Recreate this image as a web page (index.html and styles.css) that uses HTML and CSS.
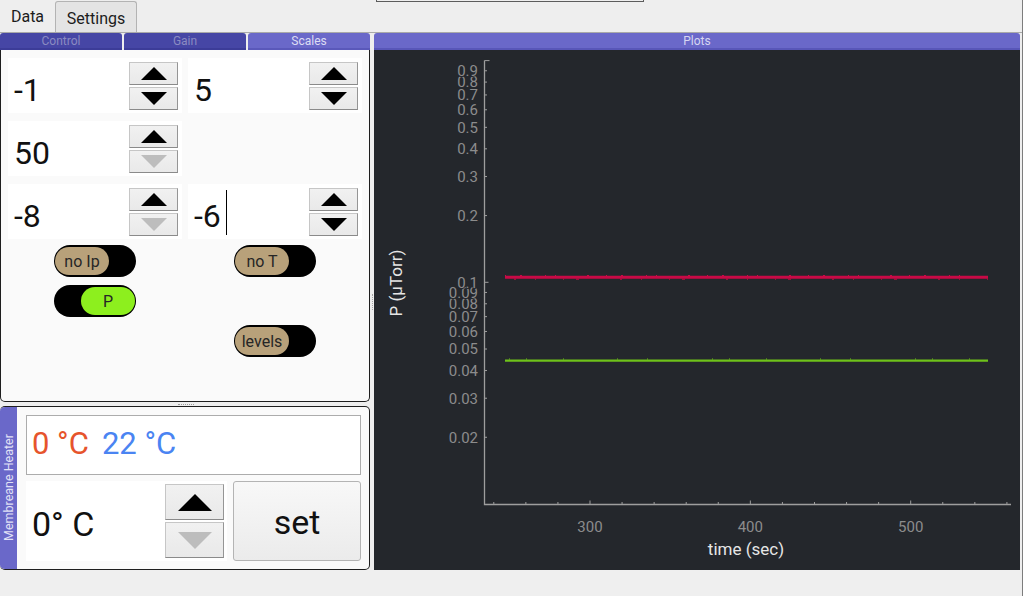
FILE: index.html
```html
<!DOCTYPE html>
<html>
<head>
<meta charset="utf-8">
<link rel="stylesheet" href="styles.css">
</head>
<body>
<div class="app">
  <div class="tabbar">
    <div class="tab tab-active">Data</div>
    <div class="tab tab-idle">Settings</div>
    <div class="ghost-box"></div>
  </div>
  <div class="pane">
    <div class="left">
      <div class="subtabs">
        <div class="subtab dim">Control</div>
        <div class="subtab dim">Gain</div>
        <div class="subtab lit">Scales</div>
      </div>
      <div class="control">
        <div class="spin-grid">
          <div class="spin">
            <div class="val">-1</div>
            <div class="btns"><div class="sb"><span class="up"></span></div><div class="sb"><span class="down"></span></div></div>
          </div>
          <div class="spin">
            <div class="val">5</div>
            <div class="btns"><div class="sb"><span class="up"></span></div><div class="sb"><span class="down"></span></div></div>
          </div>
          <div class="spin">
            <div class="val">50</div>
            <div class="btns"><div class="sb"><span class="up"></span></div><div class="sb"><span class="down off"></span></div></div>
          </div>
          <div class="cell-empty"></div>
          <div class="spin">
            <div class="val">-8</div>
            <div class="btns"><div class="sb"><span class="up"></span></div><div class="sb"><span class="down off"></span></div></div>
          </div>
          <div class="spin">
            <div class="val">-6<span class="caret"></span></div>
            <div class="btns"><div class="sb"><span class="up"></span></div><div class="sb"><span class="down"></span></div></div>
          </div>
        </div>
        <div class="toggles">
          <div class="tg"><div class="knob">no Ip</div></div>
          <div class="tg"><div class="knob">no T</div></div>
          <div class="tg on"><div class="knob">P</div></div>
          <div class="cell-empty"></div>
          <div class="cell-empty"></div>
          <div class="tg"><div class="knob">levels</div></div>
        </div>
      </div>
      <div class="hsplit"><span class="dots-h"></span></div>
      <div class="heater">
        <div class="heater-label"><span>Membreane Heater</span></div>
        <div class="heater-body">
          <div class="temp"><span class="t-red">0 °C</span><span class="t-blue">22 °C</span></div>
          <div class="heater-row">
            <div class="spin big">
              <div class="val">0° C</div>
              <div class="btns"><div class="sb"><span class="up"></span></div><div class="sb"><span class="down off"></span></div></div>
            </div>
            <div class="set-btn">set</div>
          </div>
        </div>
      </div>
    </div>
    <div class="vsplit"><span class="dots-v"></span></div>
    <div class="right">
      <div class="plots-head">Plots</div>
      <div class="plot">
        <svg width="646" height="520" viewBox="0 0 646 520" xmlns="http://www.w3.org/2000/svg">
          <g class="ylabels">
            <text x="104" y="392.57">0.02</text>
            <text x="104" y="353.53">0.03</text>
            <text x="104" y="325.82">0.04</text>
            <text x="104" y="304.33">0.05</text>
            <text x="104" y="286.77">0.06</text>
            <text x="104" y="271.94">0.07</text>
            <text x="104" y="259.08">0.08</text>
            <text x="104" y="247.75">0.09</text>
            <text x="104" y="237.6">0.1</text>
            <text x="104" y="170.87">0.2</text>
            <text x="104" y="131.83">0.3</text>
            <text x="104" y="104.12">0.4</text>
            <text x="104" y="82.63">0.5</text>
            <text x="104" y="65.07">0.6</text>
            <text x="104" y="50.24">0.7</text>
            <text x="104" y="37.38">0.8</text>
            <text x="104" y="26.05">0.9</text>
          </g>
          <path class="axis" d="M110.5 10.6V454.5H637"/>
          <path class="ticks" d="M110.5 10.6h5M110.5 20.75h2.5M110.5 32.08h2.5M110.5 44.94h2.5M110.5 59.77h2.5M110.5 77.33h2.5M110.5 98.82h2.5M110.5 126.53h2.5M110.5 165.57h2.5M110.5 232.3h4M110.5 242.45h2.5M110.5 253.78h2.5M110.5 266.64h2.5M110.5 281.47h2.5M110.5 299.03h2.5M110.5 320.52h2.5M110.5 348.23h2.5M110.5 387.27h2.5"/>
          <path class="ticks" d="M119.79 454.5v-2.5M151.86 454.5v-2.5M183.93 454.5v-2.5M216 454.5v-4M248.07 454.5v-2.5M280.14 454.5v-2.5M312.21 454.5v-2.5M344.28 454.5v-2.5M376.35 454.5v-4M408.42 454.5v-2.5M440.49 454.5v-2.5M472.56 454.5v-2.5M504.63 454.5v-2.5M536.7 454.5v-4M568.77 454.5v-2.5M600.84 454.5v-2.5M632.91 454.5v-2.5"/>
          <g class="xlabels">
            <text x="216" y="481.5">300</text>
            <text x="376.35" y="481.5">400</text>
            <text x="536.7" y="481.5">500</text>
          </g>
          <text class="axis-title" x="372" y="505">time (sec)</text>
          <text class="axis-title" transform="translate(28 233) rotate(-90)" x="0" y="0">P (µTorr)</text>
          <line class="red" x1="131" y1="227.3" x2="614" y2="227.3"/>
          <line class="red-noise" x1="131" y1="225.5" x2="614" y2="225.5"/>
          <line class="red-noise2" x1="140" y1="229.2" x2="614" y2="229.2"/>
          <line class="green" x1="131" y1="310.6" x2="614" y2="310.6"/>
          <line class="green-noise" x1="135" y1="309" x2="614" y2="309"/>
        </svg>
      </div>
    </div>
  </div>
  <div class="status"></div>
</div>
</body>
</html>
```

FILE: styles.css
```css
* { box-sizing: border-box; }
html, body { margin: 0; padding: 0; }
body {
  width: 1023px;
  height: 596px;
  overflow: hidden;
  background: #eeeeee;
  font-family: Roboto, "Liberation Sans", sans-serif;
  color: #111;
}
.app {
  display: flex;
  flex-direction: column;
  height: 596px;
  border-right: 1px solid #7d7d7d;
}

/* top tab bar */
.tabbar { display: flex; height: 32px; flex: 0 0 32px; }
.tab {
  font-size: 16px;
  height: 32px;
  display: flex;
  align-items: center;
  justify-content: center;
  color: #1c1c1c;
}
.tab-active { width: 55px; padding-top: 1px; }
.tab-idle {
  width: 82px;
  margin-top: 1px;
  height: 31px;
  padding-top: 2px;
  background: #e4e4e4;
  border: 1px solid #b3b3b3;
  border-bottom: none;
  border-radius: 3px 3px 0 0;
}
.ghost-box {
  margin-left: 239px;
  width: 268px;
  height: 2px;
  border: 1px solid #5c5c5c;
  border-top: none;
}

/* main pane */
.pane {
  display: flex;
  height: 538px;
  flex: 0 0 538px;
  border-top: 1px solid #a9a9a9;
}
.left { width: 370px; flex: 0 0 370px; display: flex; flex-direction: column; }
.subtabs { display: flex; gap: 2px; height: 17px; flex: 0 0 17px; }
.subtab {
  width: 122px;
  font-size: 12px;
  line-height: 16px;
  text-align: center;
  border-radius: 3px 3px 0 0;
}
.subtab.dim { background: #4646a5; color: #8b8bc2; box-shadow: inset 0 -2px 0 #3c3c98; }
.subtab.lit { background: #6a68c9; color: #dcdcf4; box-shadow: inset 0 -2px 0 #5a58ba; }

.control {
  height: 352px;
  flex: 0 0 352px;
  background: #fafafa;
  border: 1px solid #1e1e1e;
  border-top: none;
  border-radius: 0 0 5px 5px;
  padding: 8px 7px 0;
}
.spin-grid {
  display: grid;
  grid-template-columns: 174px 174px;
  grid-auto-rows: 55px;
  gap: 8px 6px;
}
.spin { background: #fff; display: flex; align-items: center; }
.val {
  flex: 1;
  font-size: 32px;
  line-height: 1;
  padding: 8px 0 0 6px;
  white-space: nowrap;
  display: flex;
  align-items: center;
}
.caret {
  display: inline-block;
  width: 1px;
  height: 45px;
  background: #000;
  margin-left: 5px;
  margin-top: -6px;
}
.btns { display: flex; flex-direction: column; gap: 2px; margin-right: 4px; }
.sb {
  width: 49px;
  height: 23px;
  background: linear-gradient(#f1f1f1, #e9e9e9);
  border: 1px solid #c6c6c6;
  border-right-color: #959595;
  border-bottom-color: #8a8a8a;
  display: flex;
  align-items: center;
  justify-content: center;
}
.up {
  width: 0; height: 0;
  border-left: 13.5px solid transparent;
  border-right: 13.5px solid transparent;
  border-bottom: 13px solid #000;
}
.down {
  width: 0; height: 0;
  border-left: 13.5px solid transparent;
  border-right: 13.5px solid transparent;
  border-top: 13px solid #000;
}
.down.off { border-top-color: #bdbdbd; }
.up.off { border-bottom-color: #bdbdbd; }

.toggles {
  display: grid;
  grid-template-columns: 174px 174px;
  grid-auto-rows: 32px;
  gap: 8px 6px;
  margin-top: 6px;
}
.tg {
  justify-self: center;
  width: 82px;
  height: 32px;
  background: #000;
  border-radius: 16px;
  padding: 2px 1px;
  display: flex;
}
.tg.on { justify-content: flex-end; }
.knob {
  width: 54px;
  height: 28px;
  border-radius: 14px;
  background: #b8a17a;
  font-size: 16px;
  color: #262626;
  display: flex;
  align-items: center;
  justify-content: center;
}
.tg.on .knob { background: #8def1e; }

.hsplit {
  height: 4px;
  flex: 0 0 4px;
  display: flex;
  justify-content: center;
  align-items: center;
  padding-left: 2px;
}
.dots-h { width: 16px; height: 0; border-top: 1px dotted #9a9a9a; }

/* heater */
.heater {
  height: 164px;
  flex: 0 0 164px;
  display: flex;
  background: #fafafa;
  border: 1px solid #1e1e1e;
  border-left: none;
  border-radius: 5px;
  overflow: hidden;
}
.heater-label {
  width: 17px;
  flex: 0 0 17px;
  background: #6a68c9;
  display: flex;
  align-items: center;
  justify-content: center;
}
.heater-label span {
  writing-mode: vertical-rl;
  transform: rotate(180deg);
  font-size: 12.5px;
  color: #e0e0f6;
  white-space: nowrap;
}
.heater-body {
  flex: 1;
  padding: 8px 8px 0 9px;
  display: flex;
  flex-direction: column;
  gap: 6px;
}
.temp {
  height: 60px;
  flex: 0 0 60px;
  border: 1px solid #acacac;
  background: #fff;
  font-size: 31px;
  line-height: 1;
  display: flex;
  align-items: center;
  gap: 13px;
  padding: 0 0 3px 5px;
}
.t-red { color: #e6542c; }
.t-blue { color: #4a84f2; }
.heater-row { display: flex; gap: 6px; height: 80px; }
.spin.big { width: 201px; flex: 0 0 201px; }
.spin.big .val { font-size: 34px; padding: 5px 0 0 6px; }
.spin.big .btns { margin-right: 3px; }
.spin.big .sb { width: 59px; height: 36px; }
.spin.big .up {
  border-left-width: 17.5px;
  border-right-width: 17.5px;
  border-bottom-width: 17px;
}
.spin.big .down {
  border-left-width: 17.5px;
  border-right-width: 17.5px;
  border-top-width: 17px;
}
.set-btn {
  width: 128px;
  flex: 0 0 128px;
  background: linear-gradient(#f8f8f8, #ebebeb);
  border: 1px solid #b4b4b4;
  border-radius: 3px;
  font-size: 34px;
  line-height: 1;
  color: #111;
  display: flex;
  align-items: center;
  justify-content: center;
  padding-top: 2px;
}

/* right side */
.vsplit {
  width: 4px;
  flex: 0 0 4px;
  display: flex;
  align-items: center;
  justify-content: center;
}
.dots-v { width: 0; height: 16px; border-left: 1px dotted #a5a5a5; }
.right { width: 646px; flex: 0 0 646px; display: flex; flex-direction: column; }
.plots-head {
  height: 17px;
  flex: 0 0 17px;
  background: #6a68c9;
  box-shadow: inset 0 -2px 0 #5856b8;
  color: #d6d6f2;
  font-size: 12px;
  text-align: center;
  line-height: 16px;
  border-radius: 3px 3px 0 0;
}
.plot { flex: 1; background: #24272c; }
.plot svg { display: block; font-family: Roboto, "Liberation Sans", sans-serif; }
.ylabels text {
  font-size: 15px;
  fill: #8c8c8c;
  text-anchor: end;
  stroke: #24272c;
  stroke-width: 2px;
  paint-order: stroke;
}
.xlabels text { font-size: 15px; fill: #8c8c8c; text-anchor: middle; }
.axis-title { font-size: 17px; fill: #e6e6e6; text-anchor: middle; }
.axis { fill: none; stroke: #9e9e9e; stroke-width: 1.3; }
.ticks { fill: none; stroke: #9e9e9e; stroke-width: 1; }
.red { stroke: #c80a46; stroke-width: 3; }
.red-noise { stroke: #c80a46; stroke-width: 1; stroke-dasharray: 1 14 2 23 1 9 1 31 2 17; }
.red-noise2 { stroke: #c80a46; stroke-width: 1; stroke-dasharray: 2 19 1 27 1 12 3 41; }
.green { stroke: #6ec21a; stroke-width: 2.3; }
.green-noise { stroke: #6ec21a; stroke-width: 1; stroke-dasharray: 1 16 1 36 1 53 1 29 1 64; }

.status { height: 26px; flex: 0 0 26px; background: #efefef; }
```
